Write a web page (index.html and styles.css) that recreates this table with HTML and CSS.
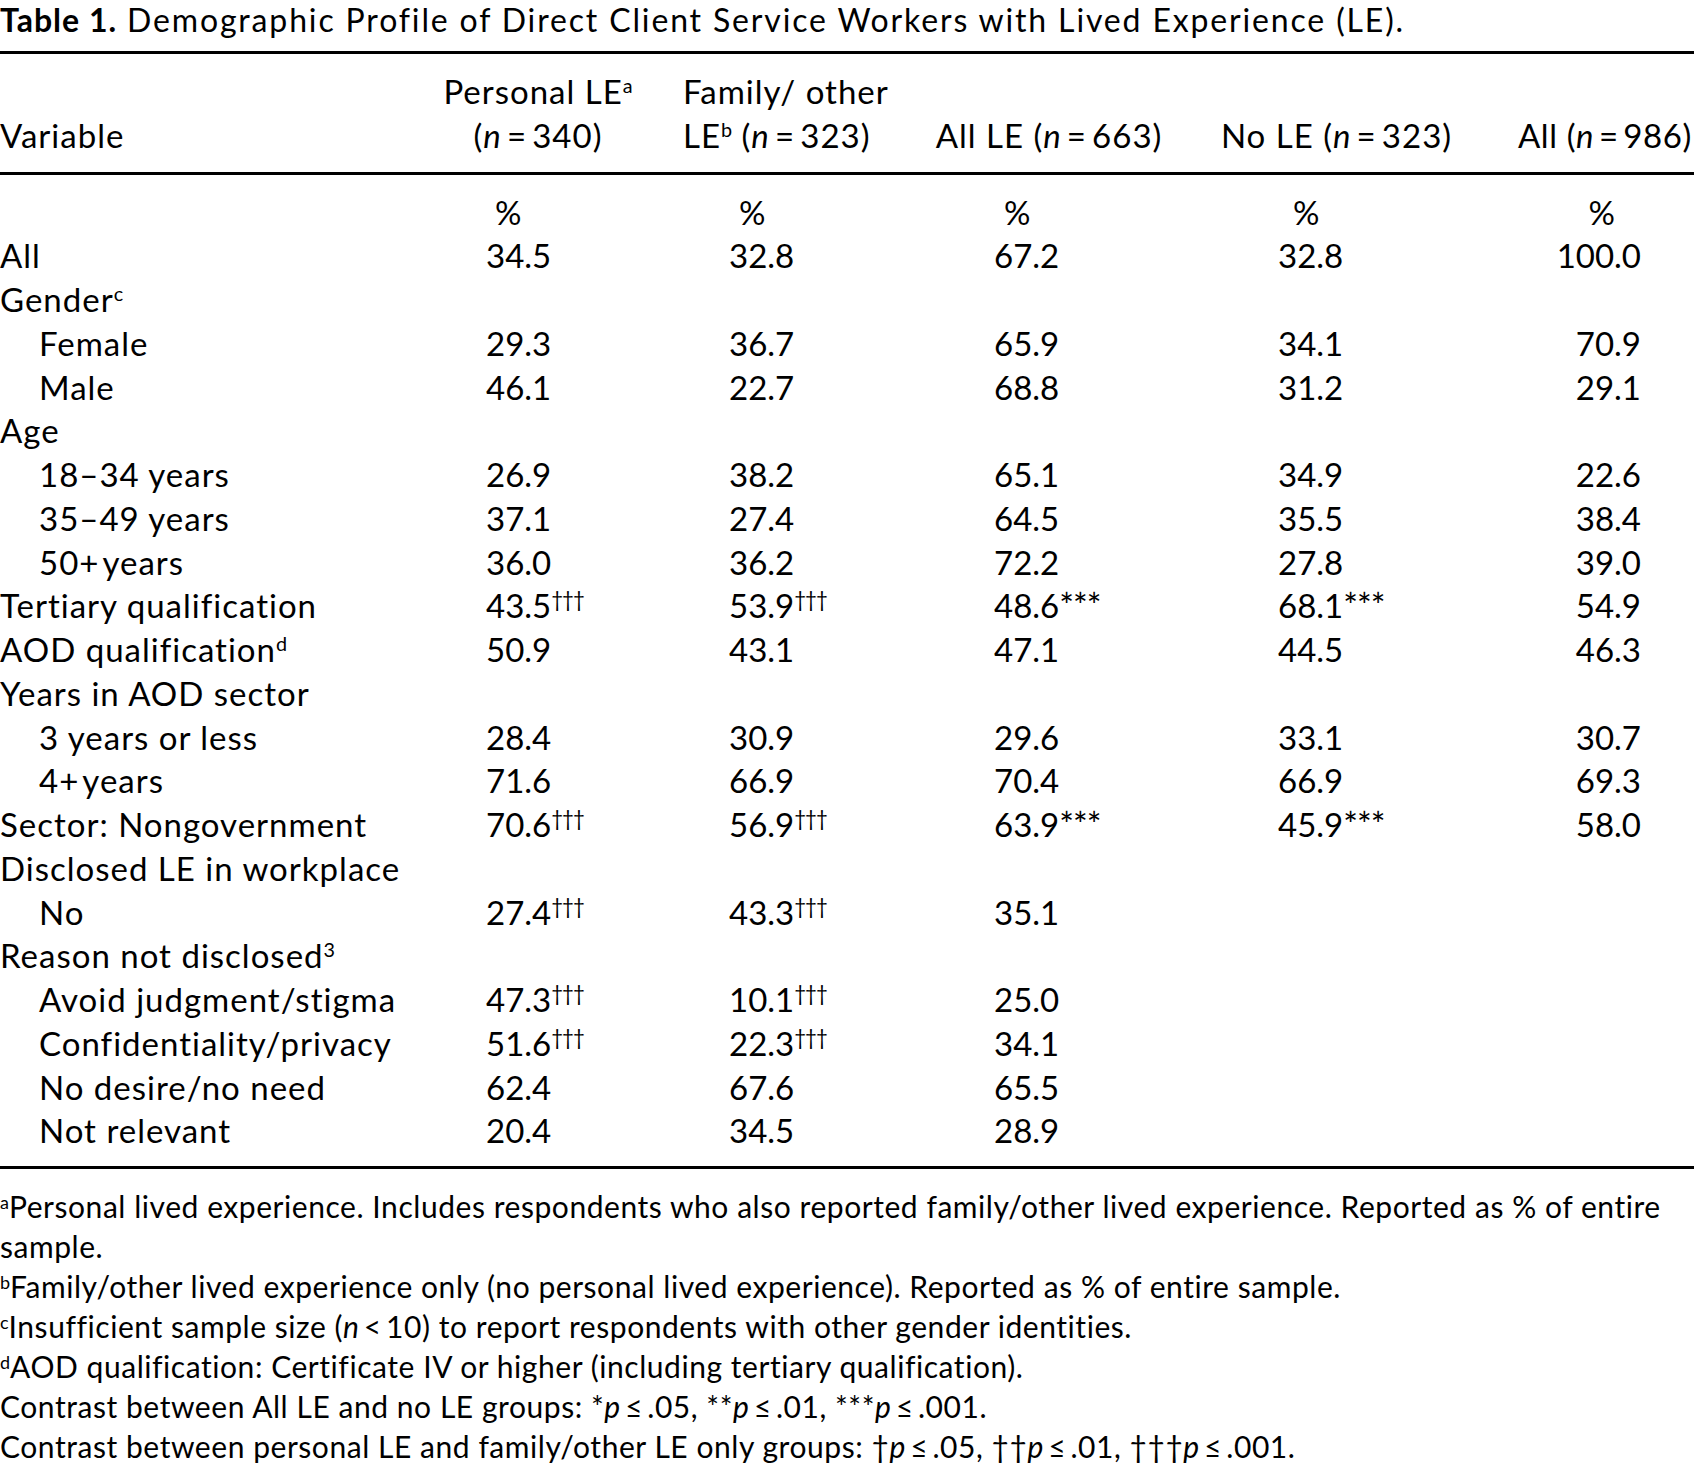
FILE: index.html
```html
<!DOCTYPE html>
<html lang="en">
<head>
<meta charset="utf-8">
<title>Table 1</title>
<link rel="stylesheet" href="styles.css">
</head>
<body>
<div class="page">
  <h1 class="caption"><b>Table 1.</b> Demographic Profile of Direct Client Service Workers with Lived Experience (LE).</h1>
  <table class="data">
    <colgroup>
      <col class="c0"><col class="c1"><col class="c2"><col class="c3"><col class="c4"><col class="c5">
    </colgroup>
    <thead>
      <tr class="head">
        <th class="var">Variable</th>
        <th class="h1">Personal LE<sup>a</sup><br>(<i>n</i>&#8201;=&#8201;340)</th>
        <th class="h2">Family/ other<br>LE<sup>b</sup> (<i>n</i>&#8201;=&#8201;323)</th>
        <th class="h3">All LE (<i>n</i>&#8201;=&#8201;663)</th>
        <th class="h4">No LE (<i>n</i>&#8201;=&#8201;323)</th>
        <th class="h5">All (<i>n</i>&#8201;=&#8201;986)</th>
      </tr>
    </thead>
    <tbody>
      <tr class="pct first"><td></td><td class="n1">%</td><td class="n2">%</td><td class="n3">%</td><td class="n4">%</td><td class="n5">%</td></tr>
      <tr><td>All</td><td class="n1">34.5</td><td class="n2">32.8</td><td class="n3">67.2</td><td class="n4">32.8</td><td class="n5">100.0</td></tr>
      <tr><td>Gender<sup>c</sup></td><td></td><td></td><td></td><td></td><td></td></tr>
      <tr><td class="sub">Female</td><td class="n1">29.3</td><td class="n2">36.7</td><td class="n3">65.9</td><td class="n4">34.1</td><td class="n5">70.9</td></tr>
      <tr><td class="sub">Male</td><td class="n1">46.1</td><td class="n2">22.7</td><td class="n3">68.8</td><td class="n4">31.2</td><td class="n5">29.1</td></tr>
      <tr><td>Age</td><td></td><td></td><td></td><td></td><td></td></tr>
      <tr><td class="sub">18–34 years</td><td class="n1">26.9</td><td class="n2">38.2</td><td class="n3">65.1</td><td class="n4">34.9</td><td class="n5">22.6</td></tr>
      <tr><td class="sub">35–49 years</td><td class="n1">37.1</td><td class="n2">27.4</td><td class="n3">64.5</td><td class="n4">35.5</td><td class="n5">38.4</td></tr>
      <tr><td class="sub">50+&#8202;years</td><td class="n1">36.0</td><td class="n2">36.2</td><td class="n3">72.2</td><td class="n4">27.8</td><td class="n5">39.0</td></tr>
      <tr><td>Tertiary qualification</td><td class="n1">43.5<sup class="dg">†††</sup></td><td class="n2">53.9<sup class="dg">†††</sup></td><td class="n3">48.6<span class="ast">***</span></td><td class="n4">68.1<span class="ast">***</span></td><td class="n5">54.9</td></tr>
      <tr><td>AOD qualification<sup>d</sup></td><td class="n1">50.9</td><td class="n2">43.1</td><td class="n3">47.1</td><td class="n4">44.5</td><td class="n5">46.3</td></tr>
      <tr><td>Years in AOD sector</td><td></td><td></td><td></td><td></td><td></td></tr>
      <tr><td class="sub">3 years or less</td><td class="n1">28.4</td><td class="n2">30.9</td><td class="n3">29.6</td><td class="n4">33.1</td><td class="n5">30.7</td></tr>
      <tr><td class="sub">4+&#8202;years</td><td class="n1">71.6</td><td class="n2">66.9</td><td class="n3">70.4</td><td class="n4">66.9</td><td class="n5">69.3</td></tr>
      <tr><td>Sector: Nongovernment</td><td class="n1">70.6<sup class="dg">†††</sup></td><td class="n2">56.9<sup class="dg">†††</sup></td><td class="n3">63.9<span class="ast">***</span></td><td class="n4">45.9<span class="ast">***</span></td><td class="n5">58.0</td></tr>
      <tr><td>Disclosed LE in workplace</td><td></td><td></td><td></td><td></td><td></td></tr>
      <tr><td class="sub">No</td><td class="n1">27.4<sup class="dg">†††</sup></td><td class="n2">43.3<sup class="dg">†††</sup></td><td class="n3">35.1</td><td></td><td></td></tr>
      <tr><td>Reason not disclosed<sup>3</sup></td><td></td><td></td><td></td><td></td><td></td></tr>
      <tr><td class="sub">Avoid judgment/stigma</td><td class="n1">47.3<sup class="dg">†††</sup></td><td class="n2">10.1<sup class="dg">†††</sup></td><td class="n3">25.0</td><td></td><td></td></tr>
      <tr><td class="sub">Confidentiality/privacy</td><td class="n1">51.6<sup class="dg">†††</sup></td><td class="n2">22.3<sup class="dg">†††</sup></td><td class="n3">34.1</td><td></td><td></td></tr>
      <tr><td class="sub">No desire/no need</td><td class="n1">62.4</td><td class="n2">67.6</td><td class="n3">65.5</td><td></td><td></td></tr>
      <tr class="last"><td class="sub">Not relevant</td><td class="n1">20.4</td><td class="n2">34.5</td><td class="n3">28.9</td><td></td><td></td></tr>
    </tbody>
  </table>
  <div class="notes">
    <p><sup>a</sup>Personal lived experience. Includes respondents who also reported family/other lived experience. Reported as % of entire<br>sample.</p>
    <p><sup>b</sup>Family/other lived experience only (no personal lived experience). Reported as % of entire sample.</p>
    <p><sup>c</sup>Insufficient sample size (<i>n</i>&#8201;&lt;&#8201;10) to report respondents with other gender identities.</p>
    <p><sup>d</sup>AOD qualification: Certificate IV or higher (including tertiary qualification).</p>
    <p>Contrast between All LE and no LE groups: *<i>p</i>&#8201;≤&#8201;.05, **<i>p</i>&#8201;≤&#8201;.01, ***<i>p</i>&#8201;≤&#8201;.001.</p>
    <p>Contrast between personal LE and family/other LE only groups: †<i>p</i>&#8201;≤&#8201;.05, ††<i>p</i>&#8201;≤&#8201;.01, †††<i>p</i>&#8201;≤&#8201;.001.</p>
  </div>
</div>
</body>
</html>
```
FILE: styles.css
```css
html, body {
  margin: 0;
  padding: 0;
  background: #ffffff;
}
.page {
  width: 1694px;
  font-family: "Lato", "Open Sans", "Liberation Sans", sans-serif;
  color: #000;
  font-size: 33px;
  letter-spacing: 1px;
}
.caption {
  margin: 0;
  font-size: 32px;
  font-weight: normal;
  line-height: 39px;
  height: 39px;
  padding-bottom: 12px;
  white-space: nowrap;
  letter-spacing: 1.85px;
}
.caption b {
  font-weight: bold;
  letter-spacing: 1px;
}
.data {
  width: 1694px;
  border-collapse: collapse;
  table-layout: fixed;
}
.c0 { width: 420px; }
.c1 { width: 236px; }
.c2 { width: 249px; }
.c3 { width: 288px; }
.c4 { width: 287px; }
.c5 { width: 214px; }
.data th, .data td {
  padding: 0;
  font-weight: normal;
  line-height: 43.75px;
  height: 43.75px;
  white-space: nowrap;
  vertical-align: middle;
}
.data thead tr {
  border-top: 3px solid #000;
  border-bottom: 3px solid #000;
}
.data thead th {
  padding-top: 16px;
  padding-bottom: 14px;
  vertical-align: bottom;
  text-align: center;
}
.data thead th.var {
  text-align: left;
}
.data thead th.h2 {
  text-align: left;
  padding-left: 27px;
}
.data thead th.h5 {
  text-align: right;
  padding-right: 2px;
  letter-spacing: 0.6px;
}
.data tbody tr.first td {
  padding-top: 16px;
}
.data tbody tr.last td {
  padding-bottom: 13px;
}
.data tbody tr.last {
  border-bottom: 3px solid #000;
}
.sub {
  padding-left: 39px !important;
}
.n1, .n2, .n3, .n4, .n5 {
  letter-spacing: 0;
}
.n1 { padding-left: 66px !important; }
.n2 { padding-left: 73px !important; }
.n3 { padding-left: 89px !important; }
.n4 { padding-left: 85px !important; }
.n5 { text-align: right; padding-right: 53px !important; }
.pct .n1 { padding-left: 75px !important; }
.pct .n2 { padding-left: 83px !important; }
.pct .n3 { padding-left: 99px !important; }
.pct .n4 { padding-left: 100px !important; }
.pct .n5 { padding-right: 79px !important; }
sup {
  font-size: 0.6em;
  line-height: 0;
  vertical-align: 0.55em;
  letter-spacing: 0;
}
sup.dg {
  font-size: 0.62em;
  letter-spacing: -1px;
}
.ast {
  font-size: 1.05em;
  line-height: 0;
  vertical-align: 0;
  letter-spacing: -1px;
}
.notes {
  padding-top: 17px;
}
.notes p {
  margin: 0;
  line-height: 40px;
  font-size: 30px;
  letter-spacing: 0.55px;
  white-space: nowrap;
}
.notes sup {
  font-size: 0.6em;
  vertical-align: 0.5em;
}
```
